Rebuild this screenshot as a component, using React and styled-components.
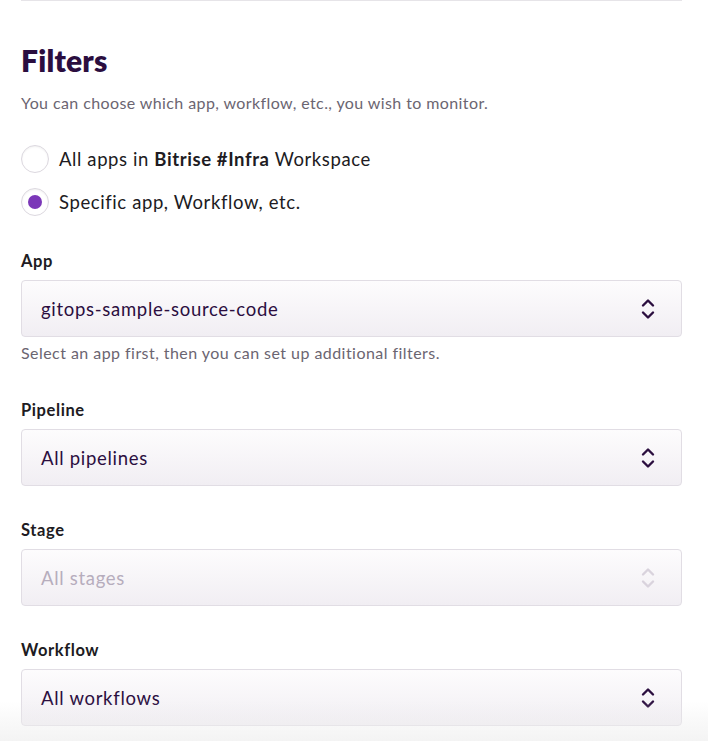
import React from "react";
import styled, { createGlobalStyle } from "styled-components";

const Global = createGlobalStyle`
  html, body { margin: 0; padding: 0; background: #ffffff; }
  body { font-family: "Lato", "Noto Sans", sans-serif; -webkit-font-smoothing: antialiased; }
  * { box-sizing: border-box; }
`;

const Page = styled.div`
  position: relative;
  width: 708px;
  height: 741px;
  overflow: hidden;
  background: #fff;
`;

const Section = styled.div`
  width: 661px;
  margin-left: 21px;
  border-top: 1px solid #e6e4e8;
  display: flex;
  flex-direction: column;
`;

const Title = styled.h2`
  margin: 41px 0 0;
  font-size: 30px;
  line-height: 36px;
  font-weight: 800;
  letter-spacing: 0.2px;
  color: #2b0e3f;
`;

const Description = styled.p`
  margin: 14px 0 0;
  font-size: 16px;
  line-height: 22px;
  letter-spacing: 0.4px;
  color: #6b6571;
`;

const RadioGroup = styled.div`
  display: flex;
  flex-direction: column;
  gap: 15px;
  margin-top: 31px;
`;

const RadioRow = styled.label`
  display: flex;
  align-items: center;
  gap: 10px;
  font-size: 18.5px;
  line-height: 28px;
  letter-spacing: 0.6px;
  color: #201b22;
  b { font-weight: 700; }
`;

const RadioCircle = styled.span`
  width: 28px;
  height: 28px;
  border-radius: 50%;
  border: 1px solid #dcd8df;
  background: #fff;
  box-shadow: inset 0 1px 2px rgba(0,0,0,0.06);
  display: flex;
  align-items: center;
  justify-content: center;
  &::after {
    content: "";
    width: 14px;
    height: 14px;
    border-radius: 50%;
    background: ${p => (p.$checked ? "#7b37b8" : "transparent")};
  }
`;

const Field = styled.div`
  display: flex;
  flex-direction: column;
  margin-top: ${p => p.$top}px;
`;

const Label = styled.div`
  font-size: 16.5px;
  line-height: 20px;
  font-weight: 700;
  letter-spacing: 0.6px;
  color: #201b22;
  margin-bottom: 9px;
`;

const SelectBox = styled.div`
  height: 57px;
  border: 1px solid #e1dde4;
  border-radius: 4px;
  background: linear-gradient(180deg, #fdfcfd 0%, #f1eef3 100%);
  display: flex;
  align-items: center;
  justify-content: space-between;
  padding: 0 26px 0 19px;
  font-size: 18.5px;
  letter-spacing: 0.7px;
  color: ${p => (p.$disabled ? "#b6adbd" : "#2b0e3f")};
`;

const Help = styled.div`
  margin-top: 6px;
  font-size: 16px;
  line-height: 20px;
  letter-spacing: 0.45px;
  color: #6b6571;
`;

const BottomFade = styled.div`
  position: absolute;
  left: 0;
  right: 0;
  bottom: 0;
  height: 40px;
  pointer-events: none;
  background: linear-gradient(180deg, rgba(238,238,238,0) 0%, rgba(238,238,238,0.35) 50%, rgba(240,240,240,0.75) 100%);
`;

const Chevrons = ({ disabled }) => (
  <svg width="14" height="22" viewBox="0 0 14 22" fill="none">
    <path
      d="M2 7.5 L7 2.5 L12 7.5 M2 14.5 L7 19.5 L12 14.5"
      stroke={disabled ? "#d9d3dd" : "#2b0e3f"}
      strokeWidth="2.4"
      strokeLinecap="round"
      strokeLinejoin="round"
    />
  </svg>
);

const Select = ({ value, disabled }) => (
  <SelectBox $disabled={disabled}>
    <span>{value}</span>
    <Chevrons disabled={disabled} />
  </SelectBox>
);

export default function App() {
  return (
    <Page>
      <Global />
      <Section>
        <Title>Filters</Title>
        <Description>You can choose which app, workflow, etc., you wish to monitor.</Description>
        <RadioGroup>
          <RadioRow>
            <RadioCircle />
            <span>All apps in <b>Bitrise #Infra</b> Workspace</span>
          </RadioRow>
          <RadioRow>
            <RadioCircle $checked />
            <span>Specific app, Workflow, etc.</span>
          </RadioRow>
        </RadioGroup>
        <Field $top={35}>
          <Label>App</Label>
          <Select value="gitops-sample-source-code" />
          <Help>Select an app first, then you can set up additional filters.</Help>
        </Field>
        <Field $top={37}>
          <Label>Pipeline</Label>
          <Select value="All pipelines" />
        </Field>
        <Field $top={34}>
          <Label>Stage</Label>
          <Select value="All stages" disabled />
        </Field>
        <Field $top={34}>
          <Label>Workflow</Label>
          <Select value="All workflows" />
        </Field>
      </Section>
      <BottomFade />
    </Page>
  );
}
